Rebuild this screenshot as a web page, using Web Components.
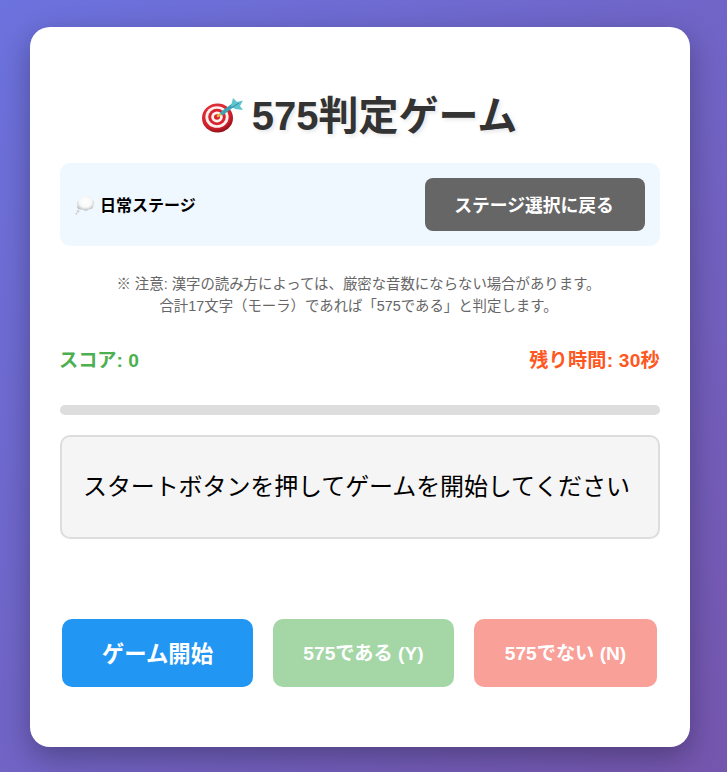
<!DOCTYPE html>
<html lang="ja">
<head>
<meta charset="utf-8">
<title>575判定ゲーム</title>
<style>
    html, body { margin: 0; height: 100%; }
    body {
        min-height: 772px;
        box-sizing: border-box;
        padding: 27px 0 0 30px;
        background: linear-gradient(135deg, #6c72de 0%, #7556ae 100%);
        font-family: "Liberation Sans", "Noto Sans CJK JP", sans-serif;
    }
</style>
</head>
<body>
<game-card>
    <game-title>575判定ゲーム</game-title>
    <stage-bar button="ステージ選択に戻る">日常ステージ</stage-bar>
    <game-note>
        <div>※ 注意: 漢字の読み方によっては、厳密な音数にならない場合があります。</div>
        <div>合計17文字（モーラ）であれば「575である」と判定します。</div>
    </game-note>
    <score-row score="スコア: 0" time="残り時間: 30秒"></score-row>
    <timer-bar></timer-bar>
    <question-box>スタートボタンを押してゲームを開始してください</question-box>
    <button-row>
        <game-button kind="start">ゲーム開始</game-button>
        <game-button kind="yes" disabled>575である (Y)</game-button>
        <game-button kind="no" disabled>575でない (N)</game-button>
    </button-row>
</game-card>

<script>
(function() {
    // Small helper: shadow root from a string of markup
    function define(name, html, setup) {
        class Element_ extends HTMLElement {
            constructor() {
                super();
                this.attachShadow({ mode: 'open' });
            }
            connectedCallback() {
                this.shadowRoot.innerHTML = html;
                if (setup) setup(this);
            }
        }
        customElements.define(name, Element_);
    }

    define('game-card', `
        <style>
            :host {
                display: block;
                box-sizing: border-box;
                width: 660px;
                height: 720px;
                padding: 30px;
                background: #fff;
                border-radius: 20px;
                box-shadow: 0 10px 30px rgba(0, 0, 0, 0.3);
            }
        </style>
        <slot></slot>
    `);

    define('game-title', `
        <style>
            :host {
                display: flex;
                justify-content: center;
                align-items: center;
                gap: 7px;
                height: 48px;
                padding: 32px 2px 26px 0;
                font-size: 40px;
                font-weight: bold;
                color: #333;
                text-shadow: 2px 2px 4px rgba(0, 0, 0, 0.1);
            }
            svg { flex: none; margin-top: 4px; }
        </style>
        <svg width="44" height="40" viewBox="0 0 44 40" role="img" aria-label="🎯">
            <defs>
                <radialGradient id="rim" cx="42%" cy="35%" r="70%">
                    <stop offset="0" stop-color="#f0434a"/>
                    <stop offset="0.7" stop-color="#d3202b"/>
                    <stop offset="1" stop-color="#7d0e15"/>
                </radialGradient>
            </defs>
            <ellipse cx="16.5" cy="23" rx="15.5" ry="14.5" fill="url(#rim)"/>
            <ellipse cx="16" cy="22" rx="11.6" ry="10.8" fill="#fbf1ee"/>
            <ellipse cx="16" cy="22" rx="8.8" ry="8.2" fill="#d8242e"/>
            <ellipse cx="16" cy="22" rx="5.8" ry="5.4" fill="#fbf1ee"/>
            <ellipse cx="16" cy="22" rx="3" ry="2.8" fill="#d8242e"/>
            <path d="M17 21 L22 17.5" stroke="#e6b53c" stroke-width="2.6" stroke-linecap="round"/>
            <path d="M21.5 18 L33 9.5" stroke="#3aa3b8" stroke-width="4" stroke-linecap="round"/>
            <path d="M30 11 L32 3 L36 7 L42 5.5 L39 11 L42 15 L34 14 Z" fill="#5ec4d0"/>
            <path d="M31 12.5 L38 8" stroke="#2f8aa0" stroke-width="1"/>
        </svg>
        <span><slot></slot></span>
    `);

    define('stage-bar', `
        <style>
            :host {
                display: flex;
                justify-content: space-between;
                align-items: center;
                box-sizing: border-box;
                height: 83px;
                padding: 15px;
                background: #f0f8ff;
                border-radius: 10px;
            }
            .label {
                display: flex;
                align-items: center;
                gap: 5px;
                font-size: 16px;
                font-weight: bold;
                color: #000;
            }
            .label span { padding-bottom: 2px; }
            button {
                box-sizing: border-box;
                width: 220px;
                height: 53px;
                padding: 0 2px 2px 0;
                border: none;
                border-radius: 8px;
                background: #666;
                color: #fff;
                font: bold 17.8px "Liberation Sans", "Noto Sans CJK JP", sans-serif;
            }
        </style>
        <div class="label">
            <svg width="20" height="20" viewBox="0 0 20 20" role="img" aria-label="💭">
                <defs>
                    <radialGradient id="puff" cx="50%" cy="40%" r="60%">
                        <stop offset="0" stop-color="#ffffff"/>
                        <stop offset="0.6" stop-color="#f7f8f8"/>
                        <stop offset="1" stop-color="#b9bdbd"/>
                    </radialGradient>
                </defs>
                <path d="M6 14.5 C3 15 1.2 12.6 2.6 10 C0.8 7.4 3 4.4 5.6 5 C6 2 9.4 -0.2 11.6 1.8 C13.8 0.6 16.4 2 16.4 4.6 C19 5 20 8.2 18.2 10 C19 12.8 16.6 15 14.2 14 C12.6 16.2 9.4 16.4 8.2 14.4 C7.4 14.8 6.6 14.8 6 14.5 Z" fill="url(#puff)"/>
                <circle cx="3" cy="16.4" r="1.3" fill="#cfd2d2"/>
                <circle cx="1.4" cy="18.8" r="0.8" fill="#b5b8b8"/>
            </svg>
            <span><slot></slot></span>
        </div>
        <button></button>
    `, (el) => {
        el.shadowRoot.querySelector('button').textContent = el.getAttribute('button');
    });

    define('game-note', `
        <style>
            :host {
                display: block;
                margin-top: 27px;
                padding-right: 3px;
                font-size: 14.4px;
                line-height: 22px;
                color: #666;
                text-align: center;
            }
        </style>
        <slot></slot>
    `);

    define('score-row', `
        <style>
            :host {
                display: flex;
                justify-content: space-between;
                margin-top: 30px;
                font-size: 19.2px;
                line-height: 28px;
                font-weight: bold;
            }
            .score { color: #4caf50; margin-left: -1px; }
            .time { color: #ff5722; letter-spacing: 0.2px; }
        </style>
        <span class="score"></span>
        <span class="time"></span>
    `, (el) => {
        el.shadowRoot.querySelector('.score').textContent = el.getAttribute('score');
        el.shadowRoot.querySelector('.time').textContent = el.getAttribute('time');
    });

    define('timer-bar', `
        <style>
            :host {
                display: block;
                height: 10px;
                margin-top: 30px;
                background: #ddd;
                border-radius: 5px;
            }
        </style>
    `);

    define('question-box', `
        <style>
            :host {
                display: flex;
                justify-content: flex-start;
                align-items: center;
                box-sizing: border-box;
                height: 104px;
                margin-top: 20px;
                padding: 0 0 5px 21px;
                border: 2px solid #ddd;
                border-radius: 10px;
                background: #f5f5f5;
                font-size: 24px;
                letter-spacing: -0.1px;
                color: #000;
            }
        </style>
        <slot></slot>
    `);

    define('button-row', `
        <style>
            :host {
                display: flex;
                gap: 20px;
                margin-top: 80px;
                padding-left: 2px;
            }
        </style>
        <slot></slot>
    `);

    define('game-button', `
        <style>
            :host { display: block; }
            button {
                display: block;
                box-sizing: border-box;
                height: 68px;
                padding: 0 0 2px;
                border: none;
                border-radius: 10px;
                color: #fff;
                font: bold 19.2px "Liberation Sans", "Noto Sans CJK JP", sans-serif;
                white-space: nowrap;
            }
            :host([kind="start"]) button { width: 191px; background: #2196f3; font-size: 22.4px; }
            :host([kind="yes"]) button { width: 181px; background: #4caf50; }
            :host([kind="no"]) button { width: 183px; background: #f44336; }
            :host([disabled]) button { opacity: 0.5; }
        </style>
        <button><slot></slot></button>
    `);
})();
</script>
</body>
</html>
